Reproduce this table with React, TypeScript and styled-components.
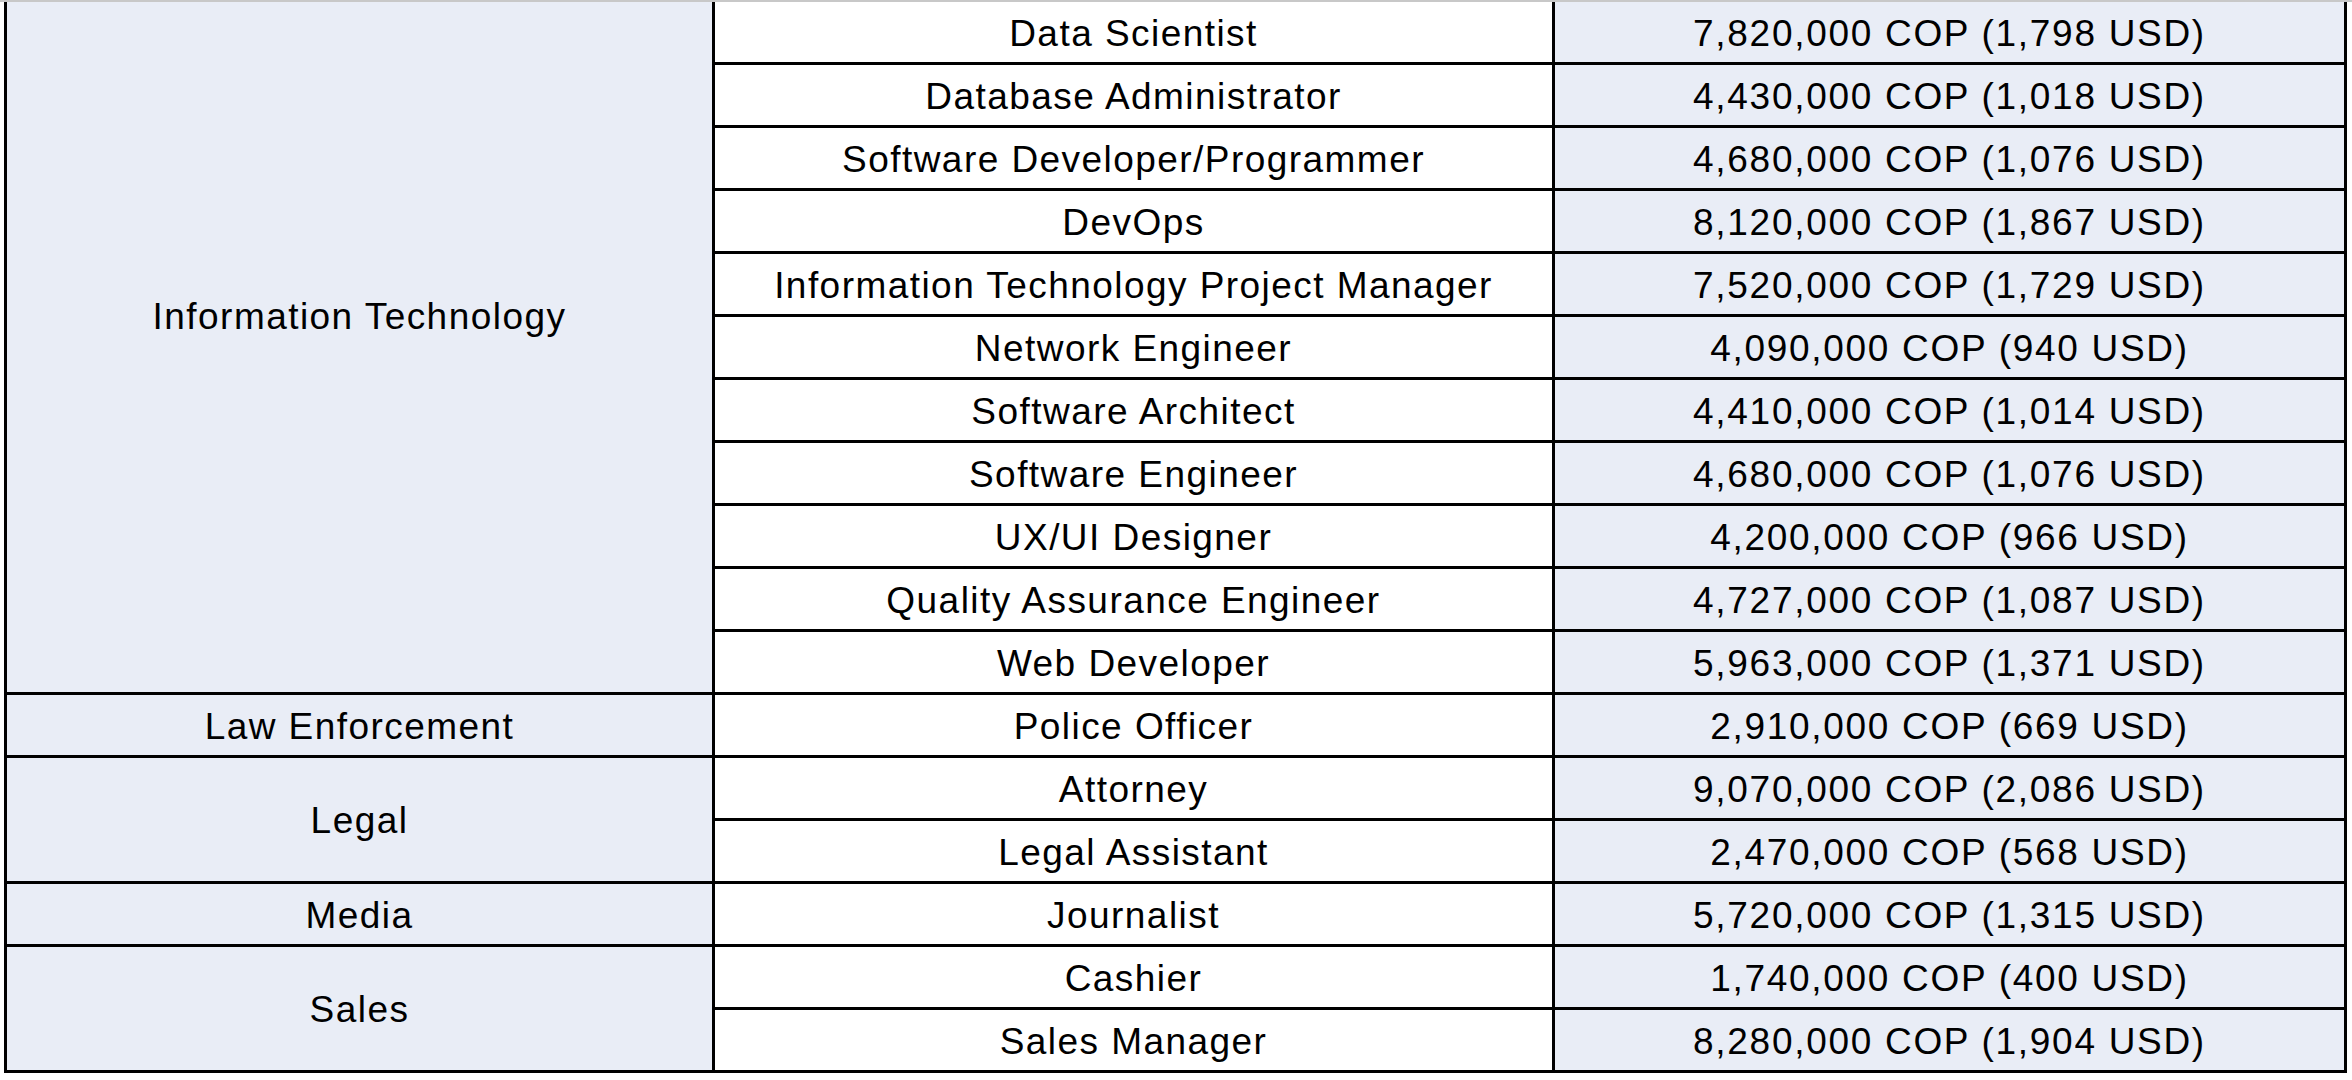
import React from "react";
import styled, { createGlobalStyle } from "styled-components";

const GlobalStyle = createGlobalStyle`
  html, body {
    margin: 0;
    padding: 0;
    background: #ffffff;
  }
  body {
    font-family: "Liberation Sans", Arial, Helvetica, sans-serif;
    color: #000000;
    overflow: hidden;
  }
`;

const Page = styled.div`
  width: 2352px;
  height: 1080px;
  display: flex;
  flex-direction: column;
  overflow: hidden;
  background: #ffffff;
`;

const TopEdge = styled.div`
  height: 2px;
  flex: 0 0 2px;
  background: #c8c8c8;
`;

const Sheet = styled.div`
  margin-left: 4px;
  width: 2343px;
  box-sizing: border-box;
  display: grid;
  grid-template-columns: 705px 837px 789px;
  grid-auto-rows: 60px;
  gap: 3px;
  padding: 0 3px 3px 3px;
  background: #000000;
`;

const Cell = styled.div<{ $tint?: boolean; $spacing?: number }>`
  display: flex;
  align-items: center;
  justify-content: center;
  box-sizing: border-box;
  padding-top: 2px;
  background: ${(p) => (p.$tint ? "#e9edf6" : "#ffffff")};
  font-size: 37px;
  letter-spacing: ${(p) => p.$spacing ?? 1.45}px;
  line-height: 1;
  white-space: nowrap;
  overflow: hidden;
`;

const CategoryCell = styled(Cell)<{ $span: number; $rowsAbove?: number }>`
  grid-column: 1;
  grid-row: span ${(p) => p.$span};
  padding-bottom: ${(p) => (p.$rowsAbove ? p.$rowsAbove * 63 : 0)}px;
`;

const JobCell = styled(Cell)`
  grid-column: 2;
`;

const SalaryCell = styled(Cell)`
  grid-column: 3;
`;

type Job = { title: string; cop: string; usd: string };
type Group = { name: string; rowsAbove?: number; jobs: Job[] };

const groups: Group[] = [
  {
    name: "Information Technology",
    rowsAbove: 1,
    jobs: [
      { title: "Data Scientist", cop: "7,820,000", usd: "1,798" },
      { title: "Database Administrator", cop: "4,430,000", usd: "1,018" },
      { title: "Software Developer/Programmer", cop: "4,680,000", usd: "1,076" },
      { title: "DevOps", cop: "8,120,000", usd: "1,867" },
      { title: "Information Technology Project Manager", cop: "7,520,000", usd: "1,729" },
      { title: "Network Engineer", cop: "4,090,000", usd: "940" },
      { title: "Software Architect", cop: "4,410,000", usd: "1,014" },
      { title: "Software Engineer", cop: "4,680,000", usd: "1,076" },
      { title: "UX/UI Designer", cop: "4,200,000", usd: "966" },
      { title: "Quality Assurance Engineer", cop: "4,727,000", usd: "1,087" },
      { title: "Web Developer", cop: "5,963,000", usd: "1,371" },
    ],
  },
  {
    name: "Law Enforcement",
    jobs: [{ title: "Police Officer", cop: "2,910,000", usd: "669" }],
  },
  {
    name: "Legal",
    jobs: [
      { title: "Attorney", cop: "9,070,000", usd: "2,086" },
      { title: "Legal Assistant", cop: "2,470,000", usd: "568" },
    ],
  },
  {
    name: "Media",
    jobs: [{ title: "Journalist", cop: "5,720,000", usd: "1,315" }],
  },
  {
    name: "Sales",
    jobs: [
      { title: "Cashier", cop: "1,740,000", usd: "400" },
      { title: "Sales Manager", cop: "8,280,000", usd: "1,904" },
    ],
  },
];

export default function App() {
  return (
    <>
      <GlobalStyle />
      <Page>
        <TopEdge />
        <Sheet>
          {groups.map((g) => (
            <React.Fragment key={g.name}>
              <CategoryCell $tint $span={g.jobs.length} $rowsAbove={g.rowsAbove}>
                {g.name}
              </CategoryCell>
              {g.jobs.map((j) => (
                <React.Fragment key={j.title}>
                  <JobCell>{j.title}</JobCell>
                  <SalaryCell $tint $spacing={1.7}>
                    {j.cop} COP ({j.usd} USD)
                  </SalaryCell>
                </React.Fragment>
              ))}
            </React.Fragment>
          ))}
        </Sheet>
      </Page>
    </>
  );
}
